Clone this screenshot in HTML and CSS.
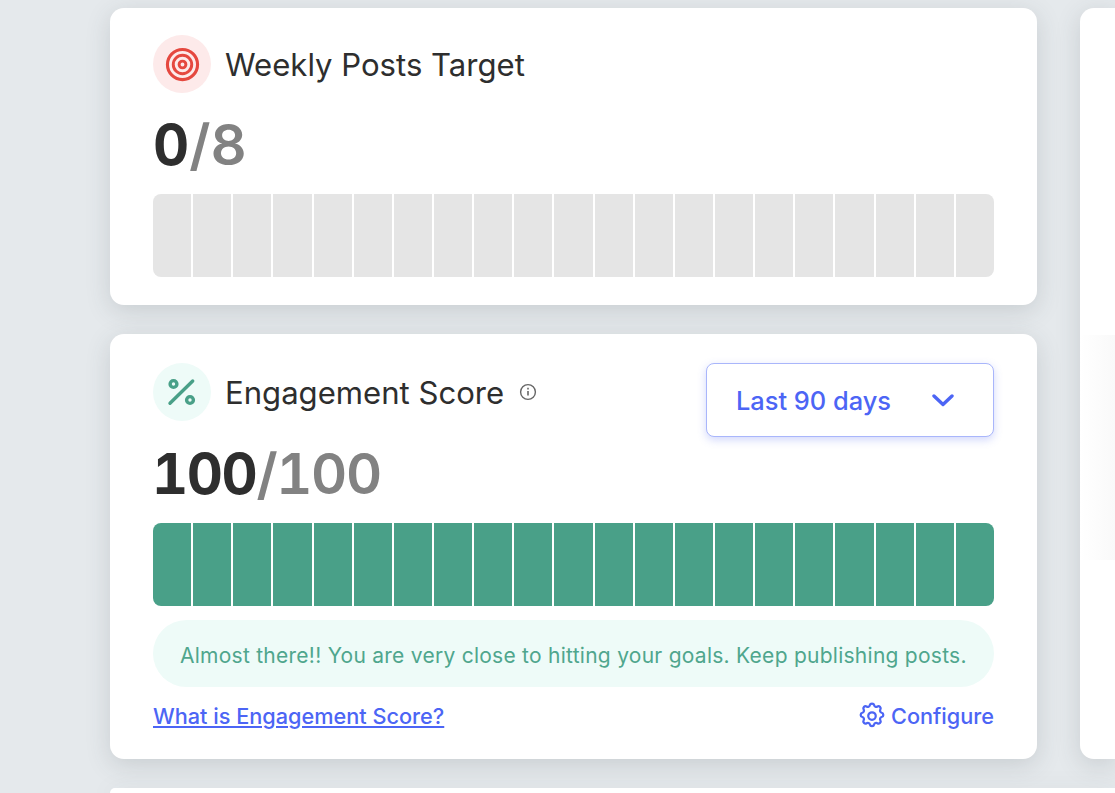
FILE: index.html
```html
<!DOCTYPE html>
<html lang="en">
<head>
  <meta charset="UTF-8">
  <meta name="viewport" content="width=device-width, initial-scale=1">
  <title>Goals</title>
  <link rel="stylesheet" href="styles.css">
</head>
<body>
  <div class="page">
    <div class="column">
      <!-- Weekly posts card -->
      <section class="card card-posts">
        <div class="card-head">
          <span class="badge badge-red">
            <svg width="35" height="35" viewBox="0 0 36 36" fill="none" stroke="#e5483f">
              <circle cx="18" cy="18" r="15.5" stroke-width="3.2"/>
              <circle cx="18" cy="18" r="9.5" stroke-width="3"/>
              <circle cx="18" cy="18" r="3.5" stroke-width="3"/>
            </svg>
          </span>
          <h2 class="card-title">Weekly Posts Target</h2>
        </div>
        <div class="score"><b>0</b>/8</div>
        <div class="meter">
          <i></i><i></i><i></i><i></i><i></i><i></i><i></i><i></i><i></i><i></i><i></i>
          <i></i><i></i><i></i><i></i><i></i><i></i><i></i><i></i><i></i><i></i>
        </div>
      </section>

      <!-- Engagement card -->
      <section class="card card-engagement">
        <div class="card-top">
          <div class="card-head">
            <span class="badge badge-green">
              <svg width="32" height="32" viewBox="0 0 32 32" fill="none" stroke="#49a088" stroke-width="3.4" stroke-linecap="round">
                <circle cx="7.5" cy="8" r="3.4"/>
                <circle cx="24" cy="24" r="3.4"/>
                <path d="M26.7 5 4 27.3"/>
              </svg>
            </span>
            <h2 class="card-title">Engagement Score</h2>
            <svg class="info" width="18" height="18" viewBox="0 0 18 18" fill="none" stroke="#666">
              <circle cx="9" cy="9" r="7.4" stroke-width="1.4"/>
              <path d="M9 8v4.6" stroke-width="1.6"/>
              <path d="M9 4.8v1.6" stroke-width="1.6"/>
            </svg>
          </div>
          <button class="range">
            <span>Last 90 days</span>
            <svg width="22" height="14" viewBox="0 0 22 14" fill="none" stroke="#4c65f5" stroke-width="3.4" stroke-linecap="round" stroke-linejoin="round">
              <path d="M2 3l9 8.5L20 3"/>
            </svg>
          </button>
        </div>
        <div class="score score-wide"><b>100</b>/100</div>
        <div class="meter meter-full">
          <i></i><i></i><i></i><i></i><i></i><i></i><i></i><i></i><i></i><i></i><i></i>
          <i></i><i></i><i></i><i></i><i></i><i></i><i></i><i></i><i></i><i></i>
        </div>
        <p class="notice">Almost there!! You are very close to hitting your goals. Keep publishing posts.</p>
        <div class="card-foot">
          <a class="foot-link" href="#">What is Engagement Score?</a>
          <a class="configure" href="#">
            <svg width="30" height="30" viewBox="0 0 24 24" fill="none" stroke="#4c65f5" stroke-width="1.8" stroke-linecap="round" stroke-linejoin="round">
              <path d="M10.3 3.3c.4-1.7 3-1.7 3.4 0a1.7 1.7 0 0 0 2.6 1.1c1.5-.9 3.3.9 2.4 2.4a1.7 1.7 0 0 0 1 2.6c1.8.4 1.8 3 0 3.4a1.7 1.7 0 0 0-1 2.6c.9 1.5-.9 3.3-2.4 2.4a1.7 1.7 0 0 0-2.6 1c-.4 1.8-3 1.8-3.4 0a1.7 1.7 0 0 0-2.6-1c-1.5.9-3.3-.9-2.4-2.4a1.7 1.7 0 0 0-1-2.6c-1.8-.4-1.8-3 0-3.4a1.7 1.7 0 0 0 1-2.6c-.9-1.5.9-3.3 2.4-2.4a1.7 1.7 0 0 0 2.6-1.1z"/>
              <circle cx="12" cy="12" r="3"/>
            </svg>
            Configure
          </a>
        </div>
      </section>
    </div>

    <section class="card card-side">
      <div class="side-shade"></div>
    </section>

    <section class="card card-next"></section>
  </div>
</body>
</html>
```

FILE: styles.css
```css
/* Page background and main columns */
html, body {
  height: 100%;
}
body {
  margin: 0;
  background-color: #e5e9ec;
  font-family: Inter, "Noto Sans", sans-serif;
  color: #2e2e2e;
  overflow: hidden;
}
.page {
  display: grid;
  grid-template-columns: 927px 1fr;
  column-gap: 43px;
  row-gap: 29px;
  padding: 8px 0 0 110px;
}
.column {
  display: flex;
  flex-direction: column;
  gap: 29px;
}
/* Cards */
.card {
  background: #ffffff;
  border-radius: 14px;
  box-shadow: 0 6px 24px rgba(60, 70, 80, 0.17);
  padding: 27px 43px 28px;
}
.card-engagement {
  padding: 29px 43px 27px;
}
.card-next {
  grid-column: 1 / -1;
  height: 5px;
  padding: 0;
  border-radius: 14px 0 0 0;
}
.card-side {
  padding: 327px 0 0;
  border-radius: 14px 0 0 14px;
  overflow: hidden;
}
.side-shade {
  height: 225px;
  background: linear-gradient(to right, #ffffff, #f9f9f9);
}
.card-head {
  display: flex;
  align-items: center;
}
.card-top {
  display: flex;
  justify-content: space-between;
  align-items: flex-start;
}
.card-title {
  margin: 2px 0 0 14px;
  font-size: 31.1px;
  font-weight: 400;
  line-height: 56px;
}
.badge {
  width: 58px;
  height: 58px;
  border-radius: 50%;
  display: flex;
  align-items: center;
  justify-content: center;
}
.badge-red {
  background-color: #fdeaea;
}
.badge-green {
  background-color: #eefbf8;
}
.info {
  margin-left: 15px;
}
.range {
  width: 288px;
  height: 74px;
  padding: 0 39px 0 29px;
  display: flex;
  align-items: center;
  justify-content: space-between;
  background: #ffffff;
  border: 1px solid #a9b6fb;
  border-radius: 8px;
  box-shadow: 0 3px 9px rgba(76, 101, 245, 0.25);
  color: #4c65f5;
  font-family: inherit;
  font-size: 25.4px;
  font-weight: 500;
}
/* Score numbers */
.score {
  margin-top: 16px;
  font-size: 56px;
  font-weight: 600;
  line-height: 72px;
  color: #828282;
  font-variant-numeric: tabular-nums;
}
.score b {
  font-weight: 700;
  color: #2e2e2e;
}
.score-wide {
  margin: 1px 0 0 -1px;
  letter-spacing: -1.4px;
}
/* Segmented meter */
.meter {
  margin-top: 13px;
  height: 83px;
  display: flex;
  gap: 2px;
  border-radius: 8px;
  overflow: hidden;
}
.meter i {
  flex: 1;
  background-color: #e5e5e5;
}
.meter-full i {
  background-color: #49a088;
}
.notice {
  margin: 14px 0 0;
  padding: 0 27px;
  height: 67px;
  line-height: 71px;
  background-color: #eefbf8;
  border-radius: 34px;
  color: #4fa68d;
  font-size: 21px;
  letter-spacing: 0.26px;
  white-space: nowrap;
}
.card-foot {
  margin-top: 13px;
  display: flex;
  justify-content: space-between;
  align-items: center;
  font-size: 21.7px;
  font-weight: 500;
  line-height: 32px;
}
.foot-link {
  color: #4c65f5;
}
.configure {
  display: flex;
  align-items: center;
  gap: 4px;
  color: #4c65f5;
  text-decoration: none;
}
```
